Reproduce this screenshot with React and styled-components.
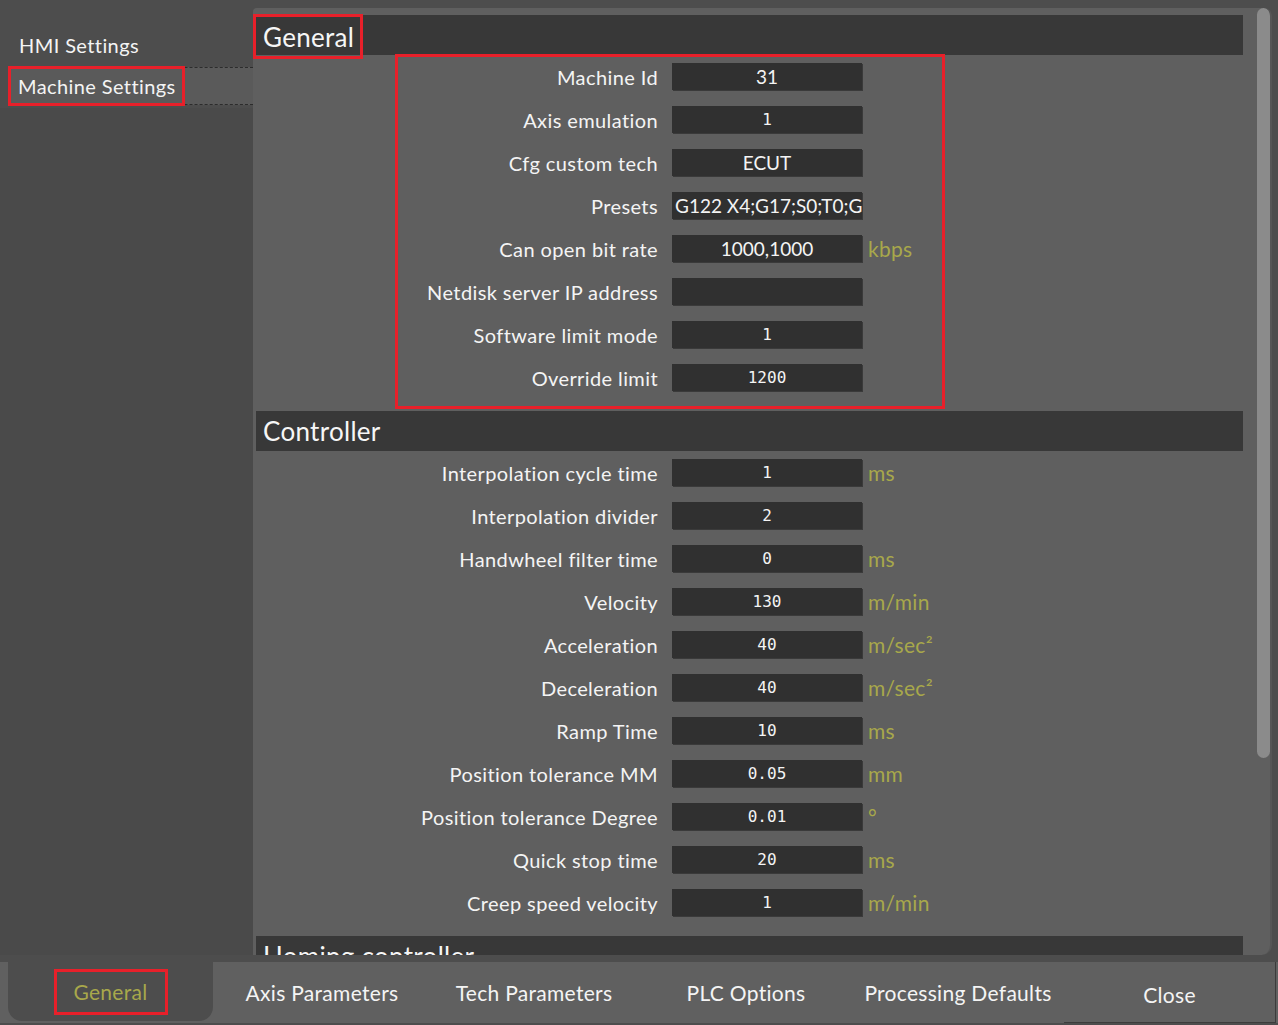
import React from "react";
import styled, { createGlobalStyle } from "styled-components";

const FONT = `"Lato", "DejaVu Sans", sans-serif`;
const MONO = `"DejaVu Sans Mono", "Liberation Mono", monospace`;
const RED = "#e8202a";
const OLIVE = "#a8a84b";

const GlobalStyle = createGlobalStyle`
  html, body {
    margin: 0;
    padding: 0;
    background: #4d4d4d;
  }
  body {
    font-family: ${FONT};
    color: #f2f2f2;
  }
`;

const general = [
  { label: "Machine Id", value: "31" },
  { label: "Axis emulation", value: "1", mono: true },
  { label: "Cfg custom tech", value: "ECUT" },
  { label: "Presets", value: "G122 X4;G17;S0;T0;G90;G40", left: true },
  { label: "Can open bit rate", value: "1000,1000", unit: "kbps" },
  { label: "Netdisk server IP address", value: "" },
  { label: "Software limit mode", value: "1", mono: true },
  { label: "Override limit", value: "1200", mono: true },
];

const controller = [
  { label: "Interpolation cycle time", value: "1", unit: "ms" },
  { label: "Interpolation divider", value: "2" },
  { label: "Handwheel filter time", value: "0", unit: "ms" },
  { label: "Velocity", value: "130", unit: "m/min" },
  { label: "Acceleration", value: "40", unit: "m/sec²" },
  { label: "Deceleration", value: "40", unit: "m/sec²" },
  { label: "Ramp Time", value: "10", unit: "ms" },
  { label: "Position tolerance MM", value: "0.05", unit: "mm" },
  { label: "Position tolerance Degree", value: "0.01", unit: "°" },
  { label: "Quick stop time", value: "20", unit: "ms" },
  { label: "Creep speed velocity", value: "1", unit: "m/min" },
].map((r) => ({ ...r, mono: true }));

const tabs = [
  "General",
  "Axis Parameters",
  "Tech Parameters",
  "PLC Options",
  "Processing Defaults",
];

const Field = ({ row }) => (
  <>
    <Label>{row.label}</Label>
    <Input $mono={row.mono} $left={row.left}>
      {row.value}
    </Input>
    <Unit>{row.unit}</Unit>
  </>
);

const App = () => {
  return (
    <Window>
      <GlobalStyle />
      <Main>
        <Sidebar>
          <NavItem>HMI Settings</NavItem>
          <NavItem $active>
            <NavMark>Machine Settings</NavMark>
          </NavItem>
        </Sidebar>
        <Panel>
          <Scroller>
            <Section>
              <SectionHeader>
                <HeaderMark>General</HeaderMark>
              </SectionHeader>
              <Rows>
                {general.map((row) => (
                  <Field key={row.label} row={row} />
                ))}
                <RowsMark />
              </Rows>
            </Section>
            <Section>
              <SectionHeader>Controller</SectionHeader>
              <Rows>
                {controller.map((row) => (
                  <Field key={row.label} row={row} />
                ))}
              </Rows>
            </Section>
            <Section>
              <SectionHeader>Homing controller</SectionHeader>
            </Section>
          </Scroller>
          <ScrollTrack>
            <Thumb />
          </ScrollTrack>
        </Panel>
      </Main>
      <TabBar>
        {tabs.map((t, i) =>
          i === 0 ? (
            <Tab key={t} $active>
              <TabMark>{t}</TabMark>
            </Tab>
          ) : (
            <Tab key={t}>{t}</Tab>
          )
        )}
        <CloseButton>Close</CloseButton>
      </TabBar>
    </Window>
  );
};

export default App;

const Window = styled.div`
  width: 1278px;
  height: 1025px;
  background: #4d4d4d;
  display: flex;
  flex-direction: column;
  overflow: hidden;
`;

const Main = styled.div`
  height: 955px;
  display: flex;
  padding-right: 6px;
`;

const Sidebar = styled.div`
  width: 253px;
  flex-shrink: 0;
  padding-top: 26px;
  display: flex;
  flex-direction: column;
  gap: 3px;
  box-sizing: border-box;
  background: linear-gradient(#4d4d4d 0 108px, #4a4a4a 108px);
`;

const NavItem = styled.div`
  height: 38px;
  margin-left: 8px;
  display: flex;
  align-items: center;
  padding-left: ${(p) => (p.$active ? "0" : "10px")};
  font-size: 20px;
  letter-spacing: 0.4px;
  color: #f4f4f4;
  background: ${(p) => (p.$active ? "#5a5a5a" : "transparent")};
  border: 1px ${(p) => (p.$active ? "dashed #2c2c2c" : "solid transparent")};
  border-right: none;
  box-sizing: border-box;
`;

const NavMark = styled.span`
  height: 40px;
  margin: -2px 0 -2px -1px;
  padding: 0 6px 0 7px;
  display: flex;
  align-items: center;
  border: 3px solid ${RED};
  box-sizing: border-box;
`;

const Panel = styled.div`
  flex: 1;
  margin-top: 8px;
  display: flex;
  background: #5f5f5f;
  border-radius: 4px 8px 10px 0;
  border-right: 2px solid #565656;
  overflow: hidden;
`;

const Scroller = styled.div`
  width: 990px;
  padding: 7px 0 0 3px;
  box-sizing: border-box;
  overflow: hidden;
`;

const Section = styled.div`
  margin-bottom: 12px;
`;

const SectionHeader = styled.div`
  height: 40px;
  display: flex;
  align-items: center;
  padding-left: 7px;
  background: #383838;
  font-size: 26px;
  letter-spacing: 0.3px;
  color: #f6f6f6;
`;

const HeaderMark = styled.span`
  height: 45px;
  margin: -1px 0 -4px -10px;
  padding: 0 6px 0 7px;
  display: flex;
  align-items: center;
  border: 3px solid ${RED};
  box-sizing: border-box;
`;

const Rows = styled.div`
  position: relative;
  display: grid;
  grid-template-columns: 416px 190px 1fr;
  grid-auto-rows: 43px;
  align-items: center;
`;

const RowsMark = styled.div`
  position: absolute;
  left: 139px;
  top: -1px;
  width: 550px;
  height: 355px;
  border: 3px solid ${RED};
  box-sizing: border-box;
  pointer-events: none;
`;

const Label = styled.div`
  padding-right: 14px;
  text-align: right;
  font-size: 20px;
  letter-spacing: 0.4px;
  color: #f4f4f4;
  white-space: nowrap;
`;

const Input = styled.div`
  height: 27px;
  display: flex;
  align-items: center;
  justify-content: ${(p) => (p.$left ? "flex-start" : "center")};
  padding: ${(p) => (p.$left ? "0 0 0 3px" : "0")};
  background: #303030;
  box-shadow: 1px 1px 0 #3a3a3a;
  font-family: ${(p) => (p.$mono ? MONO : FONT)};
  font-size: ${(p) => (p.$mono ? "16px" : "19px")};
  color: #f4f4f4;
  white-space: nowrap;
  overflow: hidden;
  box-sizing: border-box;
`;

const Unit = styled.div`
  padding-left: 6px;
  font-size: 21px;
  letter-spacing: 0.3px;
  color: ${OLIVE};
  white-space: nowrap;
`;

const ScrollTrack = styled.div`
  flex: 1;
  padding-left: 14px;
`;

const Thumb = styled.div`
  width: 13px;
  height: 750px;
  border-radius: 7px;
  background: #8b8b8b;
`;

const TabBar = styled.div`
  margin-top: 7px;
  height: 61px;
  display: flex;
  padding-left: 4px;
  background: #606060;
`;

const Tab = styled.div`
  width: ${(p) => (p.$active ? "205px" : "212px")};
  margin: ${(p) => (p.$active ? "0 3px 2px 4px" : "0")};
  display: flex;
  align-items: center;
  justify-content: center;
  font-size: 21px;
  letter-spacing: 0.3px;
  color: ${(p) => (p.$active ? OLIVE : "#f4f4f4")};
  background: ${(p) => (p.$active ? "#4d4d4d" : "transparent")};
  border-radius: 0 0 14px 14px;
`;

const TabMark = styled.span`
  width: 114px;
  height: 46px;
  margin-top: 5px;
  margin-bottom: 5px;
  display: flex;
  align-items: center;
  justify-content: center;
  border: 3px solid ${RED};
  box-sizing: border-box;
`;

const CloseButton = styled.div`
  width: 212px;
  display: flex;
  align-items: center;
  justify-content: center;
  padding-top: 4px;
  font-size: 21px;
  letter-spacing: 0.3px;
  color: #f4f4f4;
  border-right: 1px solid #3c3c3c;
  border-bottom: 1px solid #3c3c3c;
  box-sizing: border-box;
`;
